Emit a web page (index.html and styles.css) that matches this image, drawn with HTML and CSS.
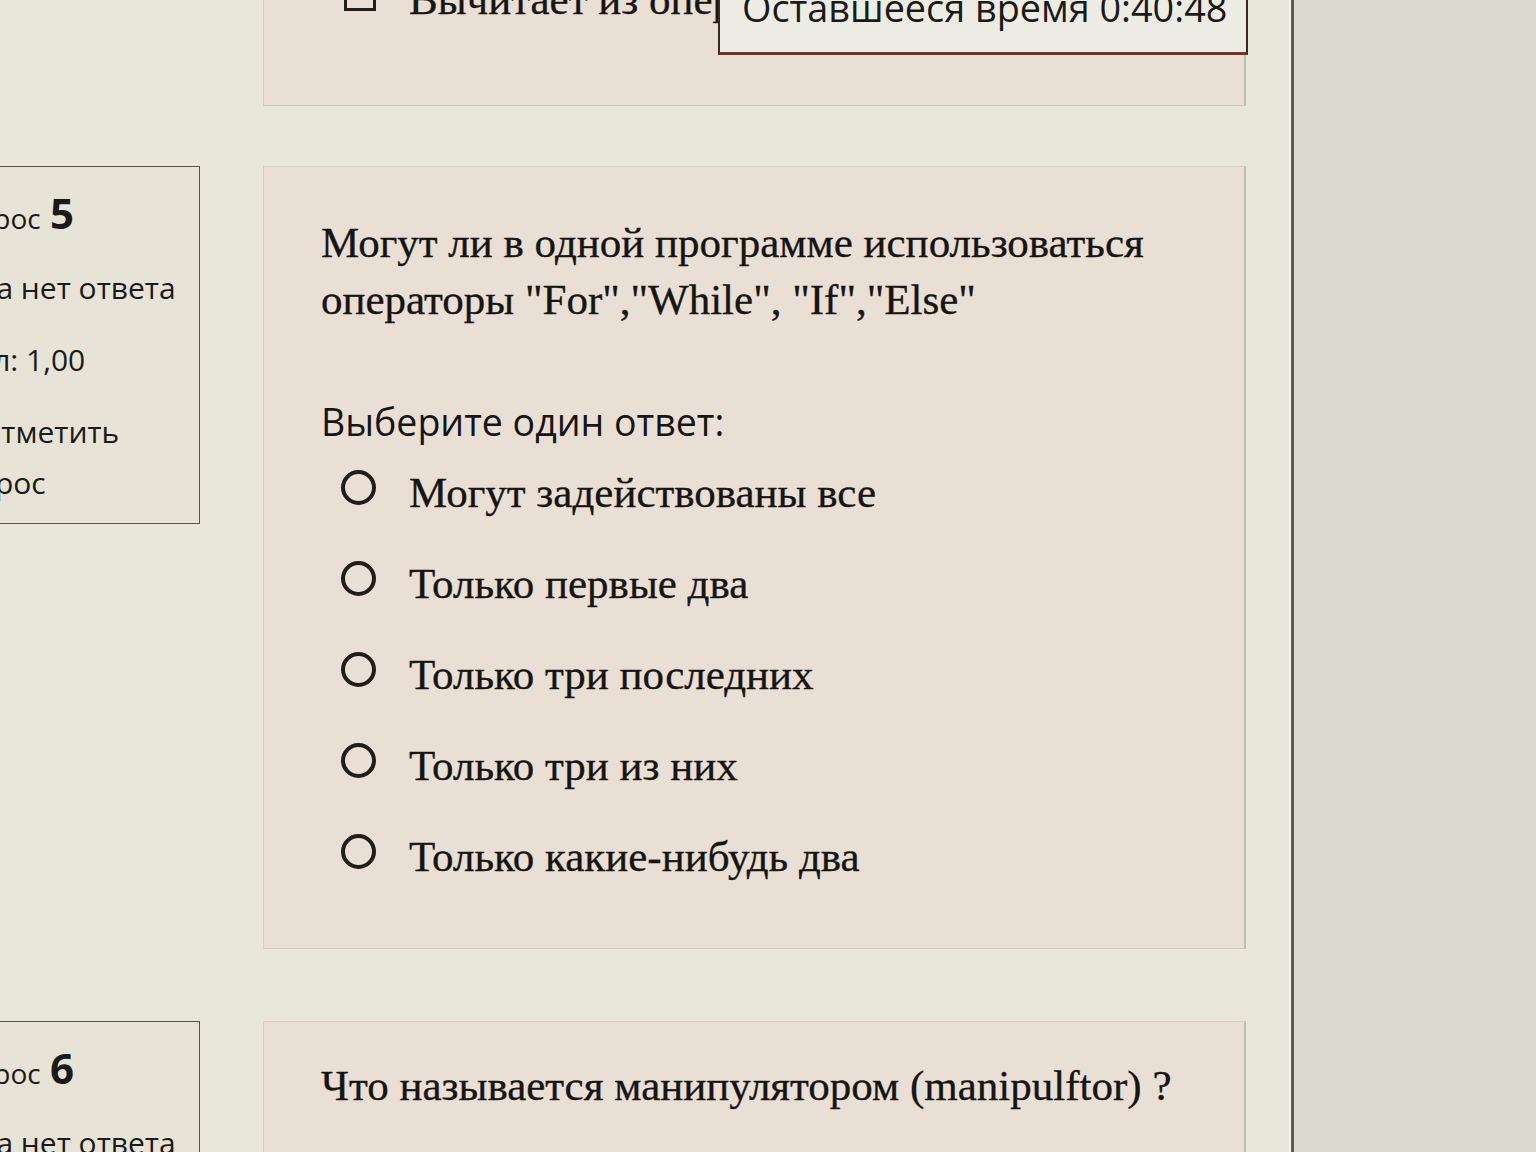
FILE: index.html
```html
<!DOCTYPE html>
<html lang="ru">
<head>
<meta charset="utf-8">
<title>Тест</title>
<link rel="stylesheet" href="styles.css">
</head>
<body>
<div class="page">
  <main class="main">
    <div class="timer">Оставшееся время 0:40:48</div>

    <section class="qrow qrow-first">
      <div class="info info-hidden"></div>
      <div class="card card-prev">
        <div class="option">
          <span class="checkbox"></span>
          <span class="opt-text">Вычитает из операнда значение</span>
        </div>
      </div>
    </section>

    <section class="qrow qrow-mid">
      <div class="info">
        <h3 class="info-title">Вопрос <span class="qno">5</span></h3>
        <p>Пока нет ответа</p>
        <p>Балл: 1,00</p>
        <p><span class="flag"><svg viewBox="0 0 16 16" width="24" height="24"><path d="M3 15V1.5h8l-1 2.5h4v7H8l1-2.5H4" fill="none" stroke="#333" stroke-width="1.2"/></svg></span>Отметить вопрос</p>
      </div>
      <div class="card">
        <div class="qtext">Могут ли в одной программе использоваться операторы "For","While", "If","Else"</div>
        <div class="prompt">Выберите один ответ:</div>
        <div class="answers">
          <div class="option"><span class="radio"></span><span class="opt-text">Могут задействованы все</span></div>
          <div class="option"><span class="radio"></span><span class="opt-text">Только первые два</span></div>
          <div class="option"><span class="radio"></span><span class="opt-text">Только три последних</span></div>
          <div class="option"><span class="radio"></span><span class="opt-text">Только три из них</span></div>
          <div class="option"><span class="radio"></span><span class="opt-text">Только какие-нибудь два</span></div>
        </div>
      </div>
    </section>

    <section class="qrow">
      <div class="info">
        <h3 class="info-title">Вопрос <span class="qno">6</span></h3>
        <p>Пока нет ответа</p>
        <p>Балл: 1,00</p>
      </div>
      <div class="card card-last">
        <div class="qtext">Что называется манипулятором (manipulftor) ?</div>
      </div>
    </section>
  </main>
  <aside class="side"></aside>
</div>
</body>
</html>
```
FILE: styles.css
```css
html, body {
  margin: 0;
  padding: 0;
  width: 1536px;
  height: 1152px;
  overflow: hidden;
  background: #e8e6d9;
  color: #1b1a18;
}

.page {
  display: flex;
  width: 1536px;
  height: 1152px;
}

.main {
  position: relative;
  width: 1294px;
  flex: none;
  border-right: 3px solid #5e5d52;
  box-shadow: inset -2px 0 0 #f6f5ee;
  box-sizing: border-box;
  background: #e9e7d9;
}

.side {
  flex: 1;
  background: #dddbd0;
}

.timer {
  position: absolute;
  left: 718px;
  top: -20px;
  width: 530px;
  box-sizing: border-box;
  padding: 3px 22px 19px;
  background: #edece4;
  border-left: 2px solid #3a2b22;
  border-right: 2px solid #3a2b22;
  border-bottom: 3px solid #7b321c;
  font-family: "Open Sans", "Noto Sans", sans-serif;
  font-size: 37.8px;
  line-height: 50px;
  white-space: nowrap;
  z-index: 2;
}

.qrow {
  display: flex;
  align-items: flex-start;
  margin-bottom: 72px;
}

.qrow-first {
  margin-top: -46px;
  margin-bottom: 60px;
}

.info {
  flex: none;
  width: 278px;
  margin-left: -78px;
  margin-right: 63px;
  box-sizing: border-box;
  padding: 18px 20px 16px 18px;
  background: #e7e4d7;
  border: 1.5px solid #57564b;
  font-family: "Open Sans", "Noto Sans", sans-serif;
  font-size: 30px;
  line-height: 48px;
}

.info-hidden {
  visibility: hidden;
  height: 10px;
}

.info-title {
  margin: 0;
  font-size: 28px;
  font-weight: normal;
  line-height: 56px;
}

.qno {
  font-size: 42px;
  font-weight: bold;
  margin-left: 2px;
}

.info p {
  margin: 24px 0 0;
}

.info .info-title + p {
  margin-top: 18px;
}

.flag {
  display: inline-block;
  width: 28px;
  margin-right: 9px;
  vertical-align: -3px;
}

.card {
  flex: none;
  width: 983px;
  box-sizing: border-box;
  padding: 47px 40px 46px 57px;
  background: #eadfd5;
  border: 1px solid #d9d1c8;
  border-right: 2px solid #c2bdb4;
  border-bottom: 1px solid #d2cbc2;
  color: #161512;
}

.card-prev {
  padding-top: 0;
  padding-bottom: 60px;
  border-top: none;
}

.card-last {
  min-height: 300px;
  padding-top: 35px;
}

.qtext {
  font-family: "Liberation Serif", "Times New Roman", serif;
  font-size: 43px;
  line-height: 57px;
  width: 880px;
  -webkit-text-stroke: 0.35px #161512;
}

.prompt {
  margin-top: 69px;
  font-family: "Open Sans", "Noto Sans", sans-serif;
  font-size: 37.5px;
  line-height: 50px;
}

.answers {
  display: flex;
  flex-direction: column;
}

.option {
  display: flex;
  align-items: center;
  height: 91px;
  padding-left: 20px;
  white-space: nowrap;
}

.radio {
  flex: none;
  width: 35px;
  height: 35px;
  box-sizing: border-box;
  border: 4px solid #1f1e1b;
  border-radius: 50%;
  margin-right: 33px;
  margin-bottom: 10px;
}

.checkbox {
  flex: none;
  width: 32px;
  height: 32px;
  box-sizing: border-box;
  border: 3.5px solid #1f1e1b;
  margin-left: 3px;
  margin-right: 33px;
  margin-bottom: 10px;
}

.opt-text {
  font-family: "Liberation Serif", "Times New Roman", serif;
  font-size: 43px;
  line-height: 91px;
  -webkit-text-stroke: 0.35px #161512;
}
```
